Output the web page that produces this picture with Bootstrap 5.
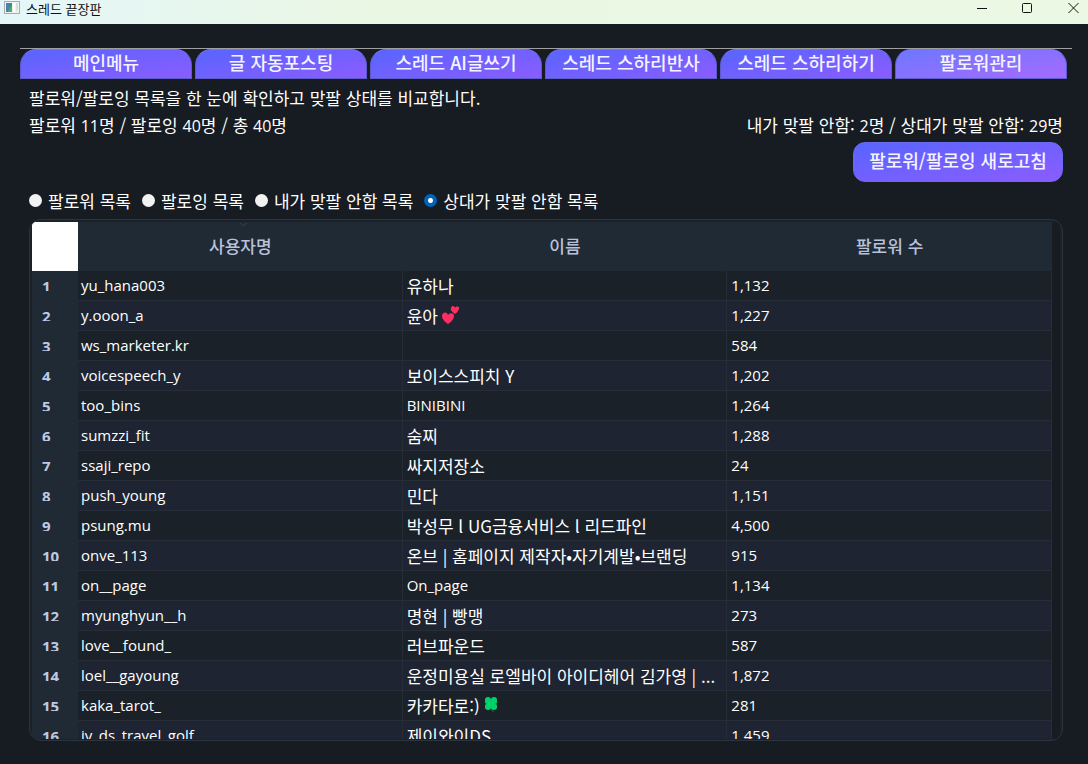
<!DOCTYPE html>
<html lang="ko">
<head>
<meta charset="utf-8">
<meta name="viewport" content="width=device-width, initial-scale=1">
<title>스레드 끝장판</title>
<link href="https://cdn.jsdelivr.net/npm/bootstrap@5.3.0/dist/css/bootstrap.min.css" rel="stylesheet">
<style>
  body { background: #171b22; color: #fff; font: 17px/27px "Noto Sans CJK KR", "Noto Sans", sans-serif; }
  .title-bar { height: 24px; color: #111; font-size: 13px; line-height: 17px; background: linear-gradient(90deg, #e4f6fa, #eaf7e3 35%, #ebf8e4); }
  .title-bar button { color: #111; line-height: 0; }
  .title-bar .caption-text { padding-left: 6px; }
  .tab-strip { margin: 24px 16px 0 20px; border-top: 1px solid #a0a0a0; padding-right: 5px; gap: 3px; }
  .tab-strip button, .refresh { color: #f4f4ff; font-size: 18px; font-weight: 500; border: 1px solid #5c5cc8; background: linear-gradient(170deg, #5865ff, #8b5cff); }
  .tab-strip button { flex: 1 1 0; height: 30px; line-height: 24px; padding: 0 0 4px; border-top-color: #7472ff; border-radius: 16px 16px 0 0; }
  .tab-strip button.active { background: linear-gradient(170deg, #6d78ff, #a56aff); }
  .pane { padding: 5px 25px 23px 29px; }
  .refresh { width: 210px; height: 40px; padding: 0 0 4px; border-color: #6a6af0; border-radius: 12px; }
  .filters { gap: 11px; margin: 5px 0; }
  .filters label { gap: 6px; }
  .filters input { appearance: none; width: 13px; height: 13px; border-radius: 50%; background: #f2f2f2; }
  .filters input:checked { background: radial-gradient(circle, #fff 0 2px, #0063b8 3px); }
  .list-frame { border: 1px solid #2c343f; border-radius: 12px; padding: 2px 2px 1px; background: #1a2129; }
  .list-view { padding-right: 8px; background: #171b22; }
  .users { table-layout: fixed; border-collapse: separate; border-spacing: 0; background: #1a2129; }
  .users th, .users td { padding: 0; font-weight: 400; }
  .users thead th { height: 49px; padding-bottom: 2px; background: #202a35; color: #b9c2da; font-weight: 500; text-align: center; }
  .users thead th:first-child { width: 46px; background: #fff; }
  .users tbody th { background: #202a35; color: #c1c9e0; vertical-align: top; }
  .users tbody th span { display: block; height: 20px; overflow: hidden; padding-left: 10px; font: 700 15px/30px "Open Sans", sans-serif; }
  .users td { height: 30px; line-height: 29px; padding: 0 4px; border-right: 1px solid #262d37; border-bottom: 1px solid #262d37; white-space: nowrap; overflow: hidden; text-overflow: ellipsis; }
  .users td:nth-child(2) { padding-left: 3px; }
  .users tr:nth-child(even) td { background: #1e2431; }
  .users .latin { font-family: "Open Sans", sans-serif; font-size: 15px; }
  .num { font: 16px/16px "Open Sans", sans-serif; }
  .sort-mark { top: 1px; left: 50%; }
</style>
</head>
<body>
<div class="vh-100 d-flex flex-column overflow-hidden">
  <header class="title-bar d-flex align-items-start flex-shrink-0">
    <svg class="ms-1" width="16" height="15" viewBox="0 0 16 15" aria-hidden="true"><rect x=".5" y="1.500" width="15" height="12" fill="#eef2f3" stroke="#a9adb0"/><path d="M2 3h6v9H2z" fill="#3f8f80"/><path d="M2 3h3v5l-3 4z" fill="#4f7fae"/><path d="M4 12c1-4 2-5 4-6v6z" fill="#4fa96c"/><path d="M9 3h2v9H9z" fill="#fff"/><path d="M12 3h2v6l-2 3z" fill="#cfe6d6"/></svg>
    <span class="caption-text flex-grow-1">스레드 끝장판</span>
    <div class="d-flex">
      <button class="btn p-0 border-0 me-4" aria-label="최소화"><svg width="22" height="16"><path d="M1 8.500h10" stroke="#111"/></svg></button>
      <button class="btn p-0 border-0 me-4" aria-label="최대화"><svg width="22" height="16"><rect x=".5" y="3.500" width="9" height="9" rx="1" fill="none" stroke="#111"/></svg></button>
      <button class="btn p-0 border-0 me-2" aria-label="닫기"><svg width="12" height="16"><path d="M.5 3l10 10M10.500 3l-10 10" stroke="#111"/></svg></button>
    </div>
  </header>

  <nav class="tab-strip d-flex flex-shrink-0" aria-label="메뉴">
    <button>메인메뉴</button>
    <button>글 자동포스팅</button>
    <button>스레드 AI글쓰기</button>
    <button>스레드 스하리반사</button>
    <button>스레드 스하리하기</button>
    <button class="active" aria-current="page">팔로워관리</button>
  </nav>

  <main class="pane d-flex flex-column flex-grow-1 overflow-hidden">
    <div>팔로워/팔로잉 목록을 한 눈에 확인하고 맞팔 상태를 비교합니다.</div>
    <div class="d-flex justify-content-between">
      <span>팔로워 <span class="num">11</span>명 / 팔로잉 <span class="num">40</span>명 / 총 <span class="num">40</span>명</span>
      <span>내가 맞팔 안함: <span class="num">2</span>명 / 상대가 맞팔 안함: <span class="num">29</span>명</span>
    </div>
    <div class="d-flex justify-content-end mt-1 flex-shrink-0"><button class="refresh">팔로워/팔로잉 새로고침</button></div>

    <div class="filters d-flex" role="radiogroup" aria-label="목록 선택">
      <label class="d-flex align-items-center"><input class="m-0 flex-shrink-0" type="radio" name="list">팔로워 목록</label>
      <label class="d-flex align-items-center"><input class="m-0 flex-shrink-0" type="radio" name="list">팔로잉 목록</label>
      <label class="d-flex align-items-center"><input class="m-0 flex-shrink-0" type="radio" name="list">내가 맞팔 안함 목록</label>
      <label class="d-flex align-items-center"><input class="m-0 flex-shrink-0" type="radio" name="list" checked>상대가 맞팔 안함 목록</label>
    </div>

    <div class="list-frame d-flex flex-column flex-grow-1 overflow-hidden">
      <div class="list-view flex-grow-1 overflow-hidden">
        <table class="users w-100">
          <thead>
            <tr>
              <th></th>
              <th scope="col" class="position-relative">사용자명<svg class="sort-mark position-absolute" width="7" height="4" aria-hidden="true"><path d="M0 0l3.500 3L7 0" fill="none" stroke="#34404c"/></svg></th>
              <th scope="col">이름</th>
              <th scope="col">팔로워 수</th>
            </tr>
          </thead>
          <tbody>
            <tr><th scope="row"><span>1</span></th><td class="latin">yu_hana003</td><td>유하나</td><td class="latin">1,132</td></tr>
            <tr><th scope="row"><span>2</span></th><td class="latin">y.ooon_a</td><td>윤아<svg class="ms-1 align-text-top" width="18" height="21" viewBox="0 -1 18 21" role="img" aria-label="두 하트"><path d="M6 20C3 18 0 15 0 12c0-4 5-5 6-1 2-3 7-2 6 2-1 3-3 5-6 7z" fill="#ff2d60"/><path d="M13 10c-3-2-5-4-4-6 1-3 4-2 4 0 1-2 5-2 4 1-1 2-2 4-4 5z" fill="#ff2d60"/></svg></td><td class="latin">1,227</td></tr>
            <tr><th scope="row"><span>3</span></th><td class="latin">ws_marketer.kr</td><td></td><td class="latin">584</td></tr>
            <tr><th scope="row"><span>4</span></th><td class="latin">voicespeech_y</td><td>보이스스피치 Y</td><td class="latin">1,202</td></tr>
            <tr><th scope="row"><span>5</span></th><td class="latin">too_bins</td><td class="latin">BINIBINI</td><td class="latin">1,264</td></tr>
            <tr><th scope="row"><span>6</span></th><td class="latin">sumzzi_fit</td><td>숨찌</td><td class="latin">1,288</td></tr>
            <tr><th scope="row"><span>7</span></th><td class="latin">ssaji_repo</td><td>싸지저장소</td><td class="latin">24</td></tr>
            <tr><th scope="row"><span>8</span></th><td class="latin">push_young</td><td>민다</td><td class="latin">1,151</td></tr>
            <tr><th scope="row"><span>9</span></th><td class="latin">psung.mu</td><td>박성무 l UG금융서비스 l 리드파인</td><td class="latin">4,500</td></tr>
            <tr><th scope="row"><span>10</span></th><td class="latin">onve_113</td><td>온브 | 홈페이지 제작자•자기계발•브랜딩</td><td class="latin">915</td></tr>
            <tr><th scope="row"><span>11</span></th><td class="latin">on__page</td><td class="latin">On_page</td><td class="latin">1,134</td></tr>
            <tr><th scope="row"><span>12</span></th><td class="latin">myunghyun__h</td><td>명현 | 빵맹</td><td class="latin">273</td></tr>
            <tr><th scope="row"><span>13</span></th><td class="latin">love__found_</td><td>러브파운드</td><td class="latin">587</td></tr>
            <tr><th scope="row"><span>14</span></th><td class="latin">loel__gayoung</td><td>운정미용실 로엘바이 아이디헤어 김가영 | ...</td><td class="latin">1,872</td></tr>
            <tr><th scope="row"><span>15</span></th><td class="latin">kaka_tarot_</td><td>카카타로:)<svg class="ms-1 align-text-top" width="14" height="20" viewBox="0 -1 14 20" role="img" aria-label="네잎클로버"><path d="M7 12c0 4 1 5 3 6" fill="none" stroke="#078a4c"/><g fill="#00d26a"><circle cx="4" cy="6" r="3"/><circle cx="10" cy="6" r="3"/><circle cx="3" cy="8" r="2"/><circle cx="11" cy="8" r="2"/><circle cx="3" cy="12" r="2"/><circle cx="11" cy="12" r="2"/><circle cx="4" cy="13" r="3"/><circle cx="10" cy="13" r="3"/><path d="M5 7h4l2 3-2 3H5l-2-3z"/></g></svg></td><td class="latin">281</td></tr>
            <tr><th scope="row"><span>16</span></th><td class="latin">jy_ds_travel_golf</td><td>제이와이DS</td><td class="latin">1,459</td></tr>
          </tbody>
        </table>
      </div>
    </div>
  </main>
</div>
<script src="https://cdn.jsdelivr.net/npm/bootstrap@5.3.0/dist/js/bootstrap.bundle.min.js"></script>
</body>
</html>
